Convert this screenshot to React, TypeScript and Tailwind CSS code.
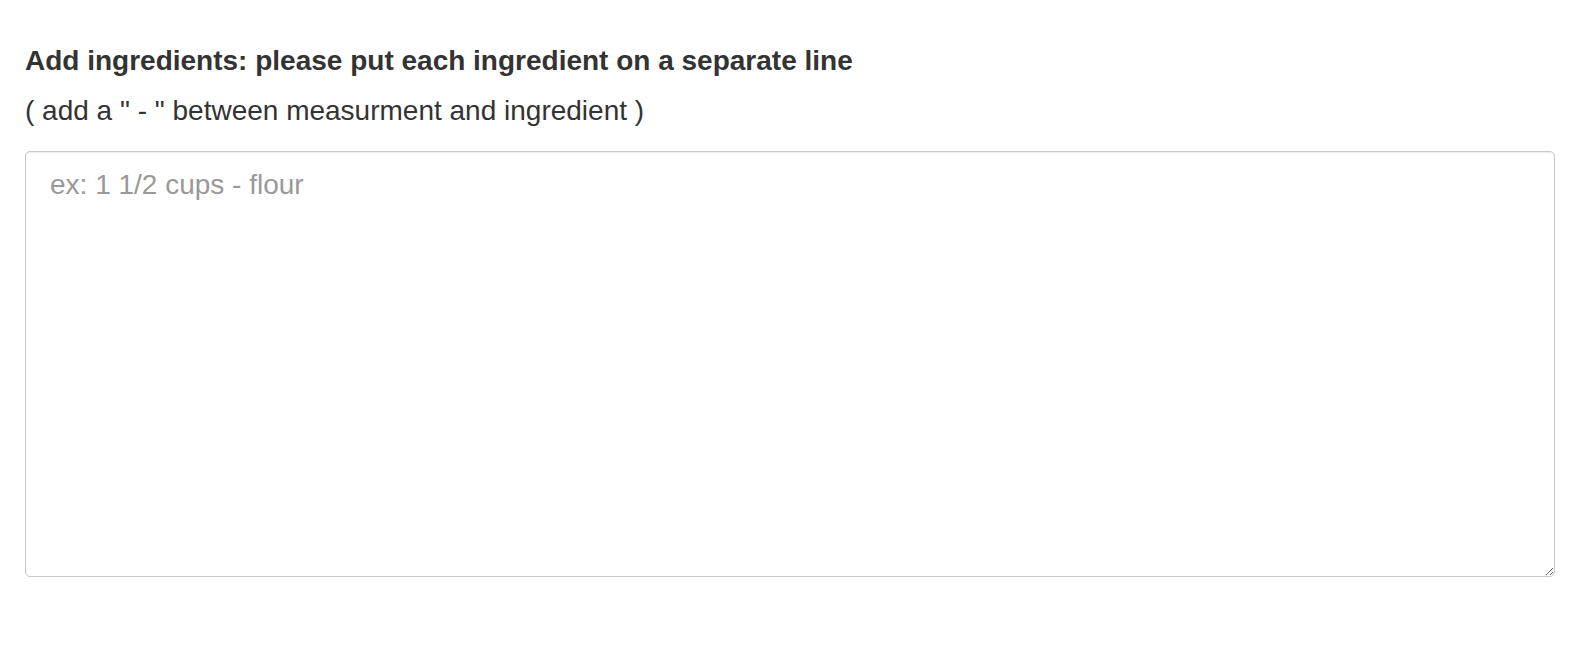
export default function App() {
  return (
    <div className="min-h-[666px] bg-white pl-[25px] pr-[27px] pt-[41px] font-['Liberation_Sans',Arial,sans-serif] text-[#333]">
      <label htmlFor="ingredients" className="block text-[28px] font-bold leading-[40px]">
        Add ingredients: please put each ingredient on a separate line
      </label>
      <p className="mt-[10px] text-[28px] leading-[40px]">( add a " - " between measurment and ingredient )</p>
      <textarea
        id="ingredients"
        placeholder="ex: 1 1/2 cups - flour"
        className="mt-[20px] block h-[426px] w-full resize-y rounded-[5px] border border-[#c8c8c8] px-[24px] pb-[9px] pt-[13px] text-[28px] leading-[40px] text-[#555] shadow-[inset_0_1px_1px_rgba(0,0,0,0.075)] outline-none placeholder:text-[#999]"
      />
    </div>
  );
}
